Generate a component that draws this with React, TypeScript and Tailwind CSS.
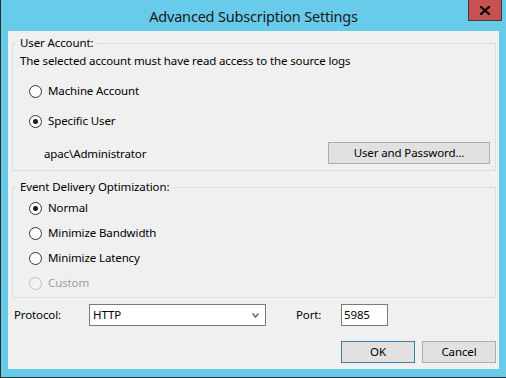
import React from 'react'

function Radio({ label, checked = false, disabled = false }: { label: string; checked?: boolean; disabled?: boolean }) {
  return (
    <div className="flex h-[20px] items-center pl-[16px]">
      <span
        className={`flex h-[13px] w-[13px] items-center justify-center rounded-full border ${
          disabled ? 'border-[#bcbcbc] bg-[#f4f4f4]' : 'border-[#333333] bg-white'
        }`}
      >
        {checked && <span className="h-[5px] w-[5px] rounded-full bg-[#1a1a1a]" />}
      </span>
      <span className={`ml-[6px] ${disabled ? 'text-[#a0a0a0]' : 'text-black'}`}>{label}</span>
    </div>
  )
}

export default function App() {
  return (
    <div className="h-[378px] w-[506px] overflow-hidden border-b border-l border-[#2b2b2b] bg-[#69cbea] font-['Noto_Sans',sans-serif] text-[11.5px] leading-[16px] tracking-[-0.12px] text-black">
      {/* Title bar */}
      <div className="relative flex h-[31px] items-center justify-center">
        <span className="text-[14.5px] leading-[20px] tracking-[-0.2px] text-[#1a1a1a]">Advanced Subscription Settings</span>
        <div className="absolute right-[4px] top-0 flex h-[21px] w-[34px] items-center justify-center border border-t-0 border-[#3c3c3c] bg-[#c75050]">
          <svg width="10" height="9" viewBox="0 0 10 9">
            <path d="M1 1 L9 8 M9 1 L1 8" stroke="#000" strokeWidth="2.2" strokeLinecap="square" />
          </svg>
        </div>
      </div>

      {/* Client area */}
      <div className="ml-[7px] flex h-[338px] w-[491px] flex-col bg-[#f0f0f0] pl-[4px] pr-[3px]">
        <fieldset className="mt-[4px] border border-[#d5dfe5] pb-[6px]">
          <legend className="ml-[3px] px-[4px] leading-[16px]">User Account:</legend>
          <div className="mt-[2px] pl-[7px]">The selected account must have read access to the source logs</div>
          <div className="mt-[12px]">
            <Radio label="Machine Account" />
          </div>
          <div className="mt-[10px]">
            <Radio label="Specific User" checked />
          </div>
          <div className="mt-[11px] flex h-[22px] items-center justify-between pl-[31px] pr-[5px]">
            <span className="pt-[2px]">apac\Administrator</span>
            <button className="h-[22px] w-[162px] border border-[#adadad] bg-[#e1e1e1]">User and Password...</button>
          </div>
        </fieldset>

        <fieldset className="mt-[8px] border border-[#d5dfe5] pb-[4px]">
          <legend className="ml-[3px] px-[4px] leading-[16px]">Event Delivery Optimization:</legend>
          <div className="mt-[3px]">
            <Radio label="Normal" checked />
          </div>
          <div className="mt-[5px]">
            <Radio label="Minimize Bandwidth" />
          </div>
          <div className="mt-[5px]">
            <Radio label="Minimize Latency" />
          </div>
          <div className="mt-[5px]">
            <Radio label="Custom" disabled />
          </div>
        </fieldset>

        <div className="mt-[6px] flex h-[22px] items-center pl-[2px]">
          <span className="w-[75px]">Protocol:</span>
          <div className="flex h-[22px] w-[177px] items-center justify-between border border-[#7a7a7a] bg-white pl-[3px] pr-[6px]">
            <span>HTTP</span>
            <svg width="7" height="5" viewBox="0 0 7 5">
              <path d="M0.5 0.5 L3.5 4 L6.5 0.5" stroke="#606060" strokeWidth="1.4" fill="none" />
            </svg>
          </div>
          <span className="ml-[30px] w-[45px]">Port:</span>
          <div className="flex h-[22px] w-[47px] items-center border border-[#7a7a7a] bg-white pl-[2px]">5985</div>
        </div>

        <div className="mt-[15px] flex justify-end gap-[7px]">
          <button className="h-[22px] w-[74px] border border-[#3c7fb1] bg-[#e1e1e1]">OK</button>
          <button className="h-[22px] w-[74px] border border-[#adadad] bg-[#e1e1e1]">Cancel</button>
        </div>
      </div>
    </div>
  )
}
